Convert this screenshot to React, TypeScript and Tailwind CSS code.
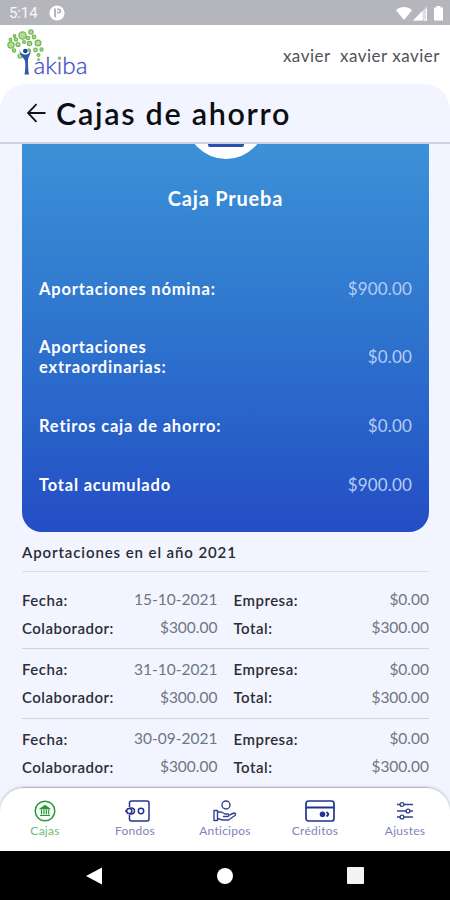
import * as React from "react";
import { clsx } from "clsx";

interface Contribution {
  date: string;
  employee: string;
  company: string;
  total: string;
}

const summary = [
  { label: "Aportaciones nómina:", value: "$900.00", height: "h-[59px]" },
  { label: "Aportaciones extraordinarias:", value: "$0.00", height: "h-[78px]" },
  { label: "Retiros caja de ahorro:", value: "$0.00", height: "h-[59px]" },
  { label: "Total acumulado", value: "$900.00", height: "h-[59px]" },
];

const contributions: Contribution[] = [
  { date: "15-10-2021", employee: "$300.00", company: "$0.00", total: "$300.00" },
  { date: "31-10-2021", employee: "$300.00", company: "$0.00", total: "$300.00" },
  { date: "30-09-2021", employee: "$300.00", company: "$0.00", total: "$300.00" },
];

const StatusBar = () => (
  <div className="flex h-[25px] shrink-0 items-center bg-[#b5b6bc] pt-px pr-[7px] pl-[9px] text-white">
    <span className="font-[Roboto] text-[15px] tracking-[-0.1px] text-white/90">5:14</span>
    <svg className="ml-[11px]" width="16" height="16" viewBox="0 0 16 16">
      <circle cx="8" cy="8" r="7.6" fill="#fff" />
      <path d="M5 3.5h2v9H6L5 11zM8.2 3.5h1.6a2.4 2.4 0 0 1 0 5H8.2z" fill="#b5b6bc" />
      <circle cx="9.4" cy="6" r="1" fill="#fff" />
    </svg>
    <svg className="ml-auto" width="47" height="15" viewBox="0 0 47 15" fill="#fff">
      <path d="M0 4.2C4.4-.1 11.6-.1 16 4.2L8 14z" />
      <path d="M31 .5V14.5H17z" fillOpacity=".55" />
      <path d="M26.5 5V14.5H17zM30 3h1v11.5h-3v-1h2z" />
      <path d="M40.5 0h4v1.5H47V14.5H38V1.5h2.5z" />
    </svg>
  </div>
);

const leaves = [
  [11, 20, 3.1], [22.5, 10.5, 3.6], [31, 7, 2.2], [16, 14.5, 1.7], [34, 12, 1.8], [28, 13, 1.7],
  [38, 18, 2.9], [29.5, 18.5, 2.2], [18, 19.5, 2], [14, 25.5, 1.7], [20, 31, 2], [35.5, 25, 1.8],
  [41.5, 24.5, 1.6], [24, 17, 1.5], [14.5, 11, 1.3], [38.5, 30, 1.4], [29, 25, 1.2], [10.5, 14.5, 1.3],
];

const Logo = () => (
  <svg width="100" height="56" viewBox="0 0 100 56">
    {leaves.map(([x, y, r]) => (
      <circle key={`${x}-${y}`} cx={x} cy={y} r={r} fill="#b4dc8e" stroke="#6fb955" strokeWidth="1.2" />
    ))}
    <circle cx="25.3" cy="26" r="2.3" fill="#1e3f9c" />
    <path d="M19 24c1.5 4.500 4 5.500 6.500 5.500s4.500-2 5.500-5c-.2 5-2.5 7-3 10.500 0 6 .2 11 1 14.500h-4.500c1-5 1-10 .5-14-2-3-5-5.500-6-11.500z" fill="#3158a9" />
    <text x="33.5" y="49" fontSize="23.5" textLength="54" lengthAdjust="spacingAndGlyphs" fill="#3f4fc8" stroke="#3f4fc8" strokeWidth="0.3" className="font-[Lato] font-light">akiba</text>
    <circle cx="38.5" cy="34.5" r="1.5" fill="#83c562" />
    <circle cx="59.5" cy="33.2" r="1.6" fill="#83c562" />
  </svg>
);

const BackIcon = () => (
  <svg width="20" height="20" viewBox="0 0 20 20" fill="none" stroke="#111318" strokeWidth="1.8">
    <path d="M19.5 10H2M10.500 1.200 2 10l8.500 8.800" />
  </svg>
);

const SummaryCard = () => (
  <section className="-mt-20 flex h-[468px] shrink-0 flex-col rounded-[20px] bg-linear-to-b from-[#4099d9] from-5% via-[#3078cf] via-52% to-[#244dc4] px-[17px] text-white">
    <div className="mx-auto mt-[15px] flex size-20 shrink-0 items-start justify-center rounded-full bg-white">
      <div className="mt-[42px] h-[26px] w-[36px] rounded-[2px] border-[3px] border-[#2d4fb5]" />
    </div>
    <h2 className="mt-[27px] text-center text-[20px] leading-6 font-bold tracking-[0.8px]">Caja Prueba</h2>
    <dl className="mt-[49px]">
      {summary.map((row) => (
        <div key={row.label} className={clsx("flex items-center justify-between", row.height)}>
          <dt className="w-[190px] text-[16.5px] leading-5 font-bold tracking-[0.8px]">{row.label}</dt>
          <dd className="text-[17px] tracking-[0.15px] text-[#b7cbf3]">{row.value}</dd>
        </div>
      ))}
    </dl>
  </section>
);

const Field = ({ label, value }: { label: string; value: string }) => (
  <div className="flex h-7 items-center justify-between">
    <span className="text-[15px] font-semibold tracking-[0.5px] text-[#2c2e36]">{label}</span>
    <span className="text-[15.5px] text-[#71757f]">{value}</span>
  </div>
);

const ContributionRow = ({ item }: { item: Contribution }) => (
  <div className="grid h-[69.5px] shrink-0 grid-cols-2 content-start gap-x-4 border-b border-[#d0d4df] pt-[6.5px]">
    <Field label="Fecha:" value={item.date} />
    <Field label="Empresa:" value={item.company} />
    <Field label="Colaborador:" value={item.employee} />
    <Field label="Total:" value={item.total} />
  </div>
);

const CajasIcon = () => (
  <svg width="22" height="22" viewBox="0 0 22 22" fill="none" stroke="#249b35" strokeWidth="1.5">
    <circle cx="11" cy="11" r="9.8" />
    <path d="M5.500 9 11 5l5.500 4z" fill="#249b35" strokeWidth="0.6" />
    <path d="M6 15.500h10M7.500 9.500v5M10 9.500v5M12.300 9.500v5M14.700 9.500v5" strokeWidth="1.2" />
  </svg>
);

const FondosIcon = () => (
  <svg className="ml-[5px]" width="26" height="22" viewBox="0 0 26 22" fill="none" stroke="#23348f" strokeWidth="1.5">
    <path d="M4.500 7V3q0-2 2-2H22q2 0 2 2v16q0 2-2 2H6.500q-2 0-2-2v-4" />
    <path d="M4.500 8h2a3 3 0 0 1 0 6h-2M0 11h2" />
    <circle cx="16" cy="11" r="2.7" />
    <circle cx="4.300" cy="11" r="2.600" />
  </svg>
);

const AnticiposIcon = () => (
  <svg width="24" height="22" viewBox="0 0 24 22" fill="none" stroke="#344493" strokeWidth="1.4" strokeLinejoin="round">
    <circle cx="13" cy="5" r="4" />
    <path d="M1 10.500h3.500v10H1zM4.500 12h4l3.500 2h3q1.500 1.500 0 2.500H10M4.500 18.500l5 1.500h6l6.500-4.500q1.500-2-1-2.500l-4.500 2" />
  </svg>
);

const CreditosIcon = () => (
  <svg className="ml-[9px]" width="30" height="22" viewBox="0 0 30 22" fill="none" stroke="#22338f" strokeWidth="1.7">
    <rect x="1" y="1" width="28" height="20" rx="2.5" />
    <path d="M1 7.500h28" strokeWidth="2" />
    <circle cx="17.500" cy="14.300" r="2.800" fill="#22338f" stroke="none" />
    <path d="M21.500 12.200q3.500 2 0 4.200" strokeWidth="2" />
  </svg>
);

const AjustesIcon = () => (
  <svg width="18" height="20" viewBox="0 0 18 20" fill="none" stroke="#34458f" strokeWidth="1.4">
    <path d="M1 3.500h3M8 3.500h9M1 10h9M14 10h3M1 16h3M8 16h9" />
    <circle cx="6" cy="3.500" r="1.900" />
    <circle cx="12" cy="10" r="1.900" />
    <circle cx="6" cy="16" r="1.900" />
  </svg>
);

const tabs = [
  { label: "Cajas", icon: <CajasIcon />, active: true },
  { label: "Fondos", icon: <FondosIcon /> },
  { label: "Anticipos", icon: <AnticiposIcon /> },
  { label: "Créditos", icon: <CreditosIcon /> },
  { label: "Ajustes", icon: <AjustesIcon /> },
];

const TabBar = () => (
  <nav className="z-10 grid h-[63px] shrink-0 grid-cols-5 rounded-t-[24px] bg-white pt-3 shadow-[0_-1px_3px_rgba(60,65,80,0.3)]">
    {tabs.map((tab) => (
      <div key={tab.label} className="flex flex-col items-center">
        <div className="flex h-[22px] items-center">{tab.icon}</div>
        <span
          className={clsx(
            "mt-px text-[12px] leading-[15px] tracking-[0.25px]",
            tab.active ? "text-[#6dbc75]" : "text-[#7d84b8]",
          )}
        >
          {tab.label}
        </span>
      </div>
    ))}
  </nav>
);

const SystemNav = () => (
  <div className="grid h-[49px] shrink-0 grid-cols-[60px_130px_130px_130px] items-center bg-black">
    <span />
    <svg className="ml-[26px]" width="16" height="18" viewBox="0 0 16 18" fill="#fff">
      <path d="M16 0.500v17L0 9z" />
    </svg>
    <span className="ml-[27px] size-4 rounded-full bg-white" />
    <span className="ml-[27px] size-[17px] rounded-[1px] bg-[#f4f4f4]" />
  </div>
);

export default function App() {
  return (
    <div className="flex h-[900px] w-[450px] flex-col overflow-hidden bg-[#f2f5ff] font-[Lato,sans-serif]">
      <StatusBar />
      <header className="flex h-[59px] shrink-0 items-start justify-between bg-white pr-[10px]">
        <Logo />
        <span className="mt-[19px] text-[17px] leading-6 tracking-[0.5px] whitespace-pre text-[#505258]">{"xavier  xavier xavier"}</span>
      </header>
      <div className="z-10 shrink-0 bg-white">
        <div className="flex h-[60px] items-center rounded-t-[26px] border-b-2 border-[#ced3df] bg-[#f2f5ff] pl-[26px]">
          <BackIcon />
          <h1 className="ml-[10px] text-[30.5px] leading-9 font-semibold tracking-[1.7px] text-[#0d0e12]">Cajas de ahorro</h1>
        </div>
      </div>
      <main className="flex min-h-0 flex-1 flex-col overflow-hidden pr-[21px] pl-[22px]">
        <SummaryCard />
        <h3 className="flex h-10 shrink-0 items-center border-b border-[#dadee8] pt-px text-[15px] font-semibold tracking-[0.9px] text-[#292b32]">
          Aportaciones en el año 2021
        </h3>
        <div className="flex flex-col pt-[7.5px]">
          {contributions.map((item) => (
            <ContributionRow key={item.date} item={item} />
          ))}
        </div>
      </main>
      <TabBar />
      <SystemNav />
    </div>
  );
}
